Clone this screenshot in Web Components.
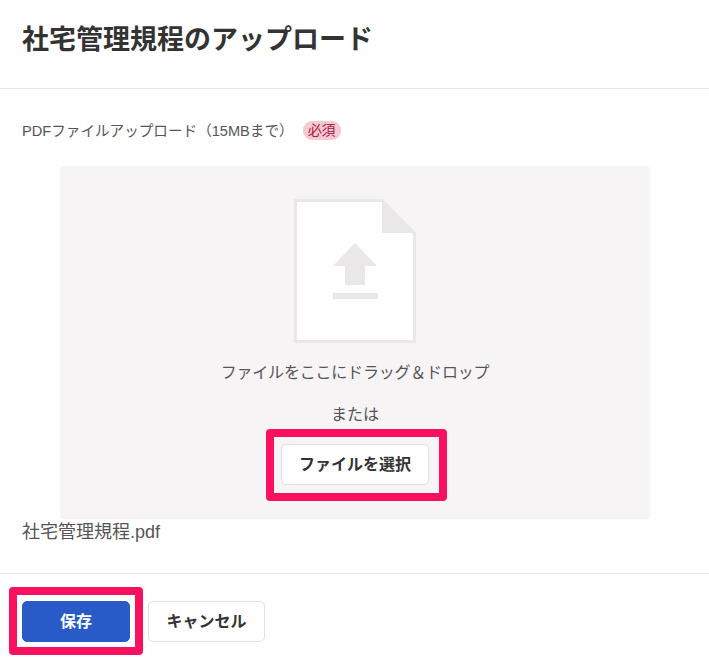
<!DOCTYPE html>
<html lang="ja">
<head>
<meta charset="utf-8">
<style>
  html, body { margin: 0; padding: 0; background: #fff; }
  body { font-family: "Liberation Sans", "Noto Sans CJK JP", sans-serif; color: #333; }
</style>
</head>
<body>
<upload-modal>
  <span slot="title">社宅管理規程のアップロード</span>
  <span slot="label">PDFファイルアップロード（15MBまで）</span>
  <span slot="file">社宅管理規程.pdf</span>
</upload-modal>
<script>
// small pink-red marker around a button
class MarkBox extends HTMLElement {
  constructor(){
    super();
    this.attachShadow({mode: 'open'});
    this.shadowRoot.innerHTML = `
    <style>
      :host { display: inline-flex; position: relative; }
      .mark {
        position: absolute;
        box-sizing: border-box;
        border: 8px solid #f9115f;
        border-radius: 4px;
        pointer-events: none;
      }
    </style>
    <slot></slot>
    <div class="mark" part="mark"></div>
    `;
  }
  connectedCallback(){
    const mark = this.shadowRoot.querySelector('.mark');
    const [t, r, b, l] = (this.getAttribute('out') || '15 15 15 15').split(' ');
    mark.style.inset = `-${t}px -${r}px -${b}px -${l}px`;
  }
}
customElements.define('mark-box', MarkBox);

class AppButton extends HTMLElement {
  constructor(){
    super();
    this.attachShadow({mode: 'open'});
    this.shadowRoot.innerHTML = `
    <style>
      :host { display: inline-flex; }
      button {
        box-sizing: border-box;
        height: 41px;
        width: var(--btn-width, auto);
        padding: 0 0 3px;
        font: bold 16px "Liberation Sans", "Noto Sans CJK JP", sans-serif;
        color: #333;
        background: #fff;
        border: 1px solid #e2e0e0;
        border-radius: 5px;
      }
      :host([primary]) button {
        color: #fff;
        background: #295bc8;
        border-color: #295bc8;
      }
    </style>
    <button type="button"><slot></slot></button>
    `;
  }
}
customElements.define('app-button', AppButton);

class DocIcon extends HTMLElement {
  constructor(){
    super();
    this.attachShadow({mode: 'open'});
    this.shadowRoot.innerHTML = `
    <style>
      :host { display: block; width: 122px; height: 144px; }
      svg { display: block; }
    </style>
    <svg width="122" height="144" viewBox="0 0 122 144">
      <path d="M1.5 1.5H88L120.5 34V142.5H1.5Z" fill="#fff" stroke="#e9e7e7" stroke-width="3"/>
      <path d="M88 1.5L122 34H88Z" fill="#e9e7e7"/>
      <path d="M61 44L83 67H71V86H51V67H39Z" fill="#e9e7e7"/>
      <rect x="39" y="94" width="45" height="6" fill="#e9e7e7"/>
    </svg>
    `;
  }
}
customElements.define('doc-icon', DocIcon);

class DropZone extends HTMLElement {
  constructor(){
    super();
    this.attachShadow({mode: 'open'});
    this.shadowRoot.innerHTML = `
    <style>
      :host {
        display: flex;
        flex-direction: column;
        align-items: center;
        box-sizing: border-box;
        width: 590px;
        height: 353px;
        margin-left: 38px;
        padding-top: 33px;
        background: #f6f4f5;
        border-radius: 4px;
        color: #555;
        font-size: 16px;
      }
      p { margin: 0; line-height: 24px; }
      .drag { margin-top: 18px; letter-spacing: -0.2px; }
      .or { margin-top: 18px; }
      mark-box { margin-top: 17px; }
    </style>
    <doc-icon></doc-icon>
    <p class="drag">ファイルをここにドラッグ＆ドロップ</p>
    <p class="or">または</p>
    <mark-box out="15 18 16 15"><app-button style="--btn-width:148px">ファイルを選択</app-button></mark-box>
    `;
  }
}
customElements.define('drop-zone', DropZone);

class UploadModal extends HTMLElement {
  constructor(){
    super();
    this.attachShadow({mode: 'open'});
    this.shadowRoot.innerHTML = `
    <style>
      :host { display: block; width: 709px; height: 658px; overflow: hidden; }
      header {
        box-sizing: border-box;
        height: 89px;
        padding: 23px 22px 0;
        border-bottom: 1px solid #e6e6e6;
      }
      h1 { margin: 0; font-size: 27px; line-height: 34px; font-weight: bold; color: #333; }
      main { padding: 30px 22px 0; height: 485px; box-sizing: border-box; border-bottom: 1px solid #e6e6e6; }
      .label {
        display: flex;
        align-items: center;
        justify-content: flex-start;
        height: 22px;
        font-size: 14.6px;
        color: #555;
      }
      .label ::slotted(span) { position: relative; top: -1px; }
      .req {
        margin-left: 9px;
        padding: 0 5px;
        font-size: 14px;
        line-height: 19px;
        color: #a8203f;
        background: #f7c9d2;
        border-radius: 9px;
      }
      drop-zone { margin-top: 25px; }
      .file { margin-top: 1px; font-size: 18px; line-height: 24px; color: #555; }
      footer { display: flex; gap: 18px; padding: 27px 22px 0; }
    </style>
    <header><h1><slot name="title"></slot></h1></header>
    <main>
      <div class="label"><slot name="label"></slot><span class="req">必須</span></div>
      <drop-zone></drop-zone>
      <div class="file"><slot name="file"></slot></div>
    </main>
    <footer>
      <mark-box out="14 13 13 13"><app-button primary style="--btn-width:108px">保存</app-button></mark-box>
      <app-button style="--btn-width:117px">キャンセル</app-button>
    </footer>
    `;
  }
}
customElements.define('upload-modal', UploadModal);
</script>
</body>
</html>
